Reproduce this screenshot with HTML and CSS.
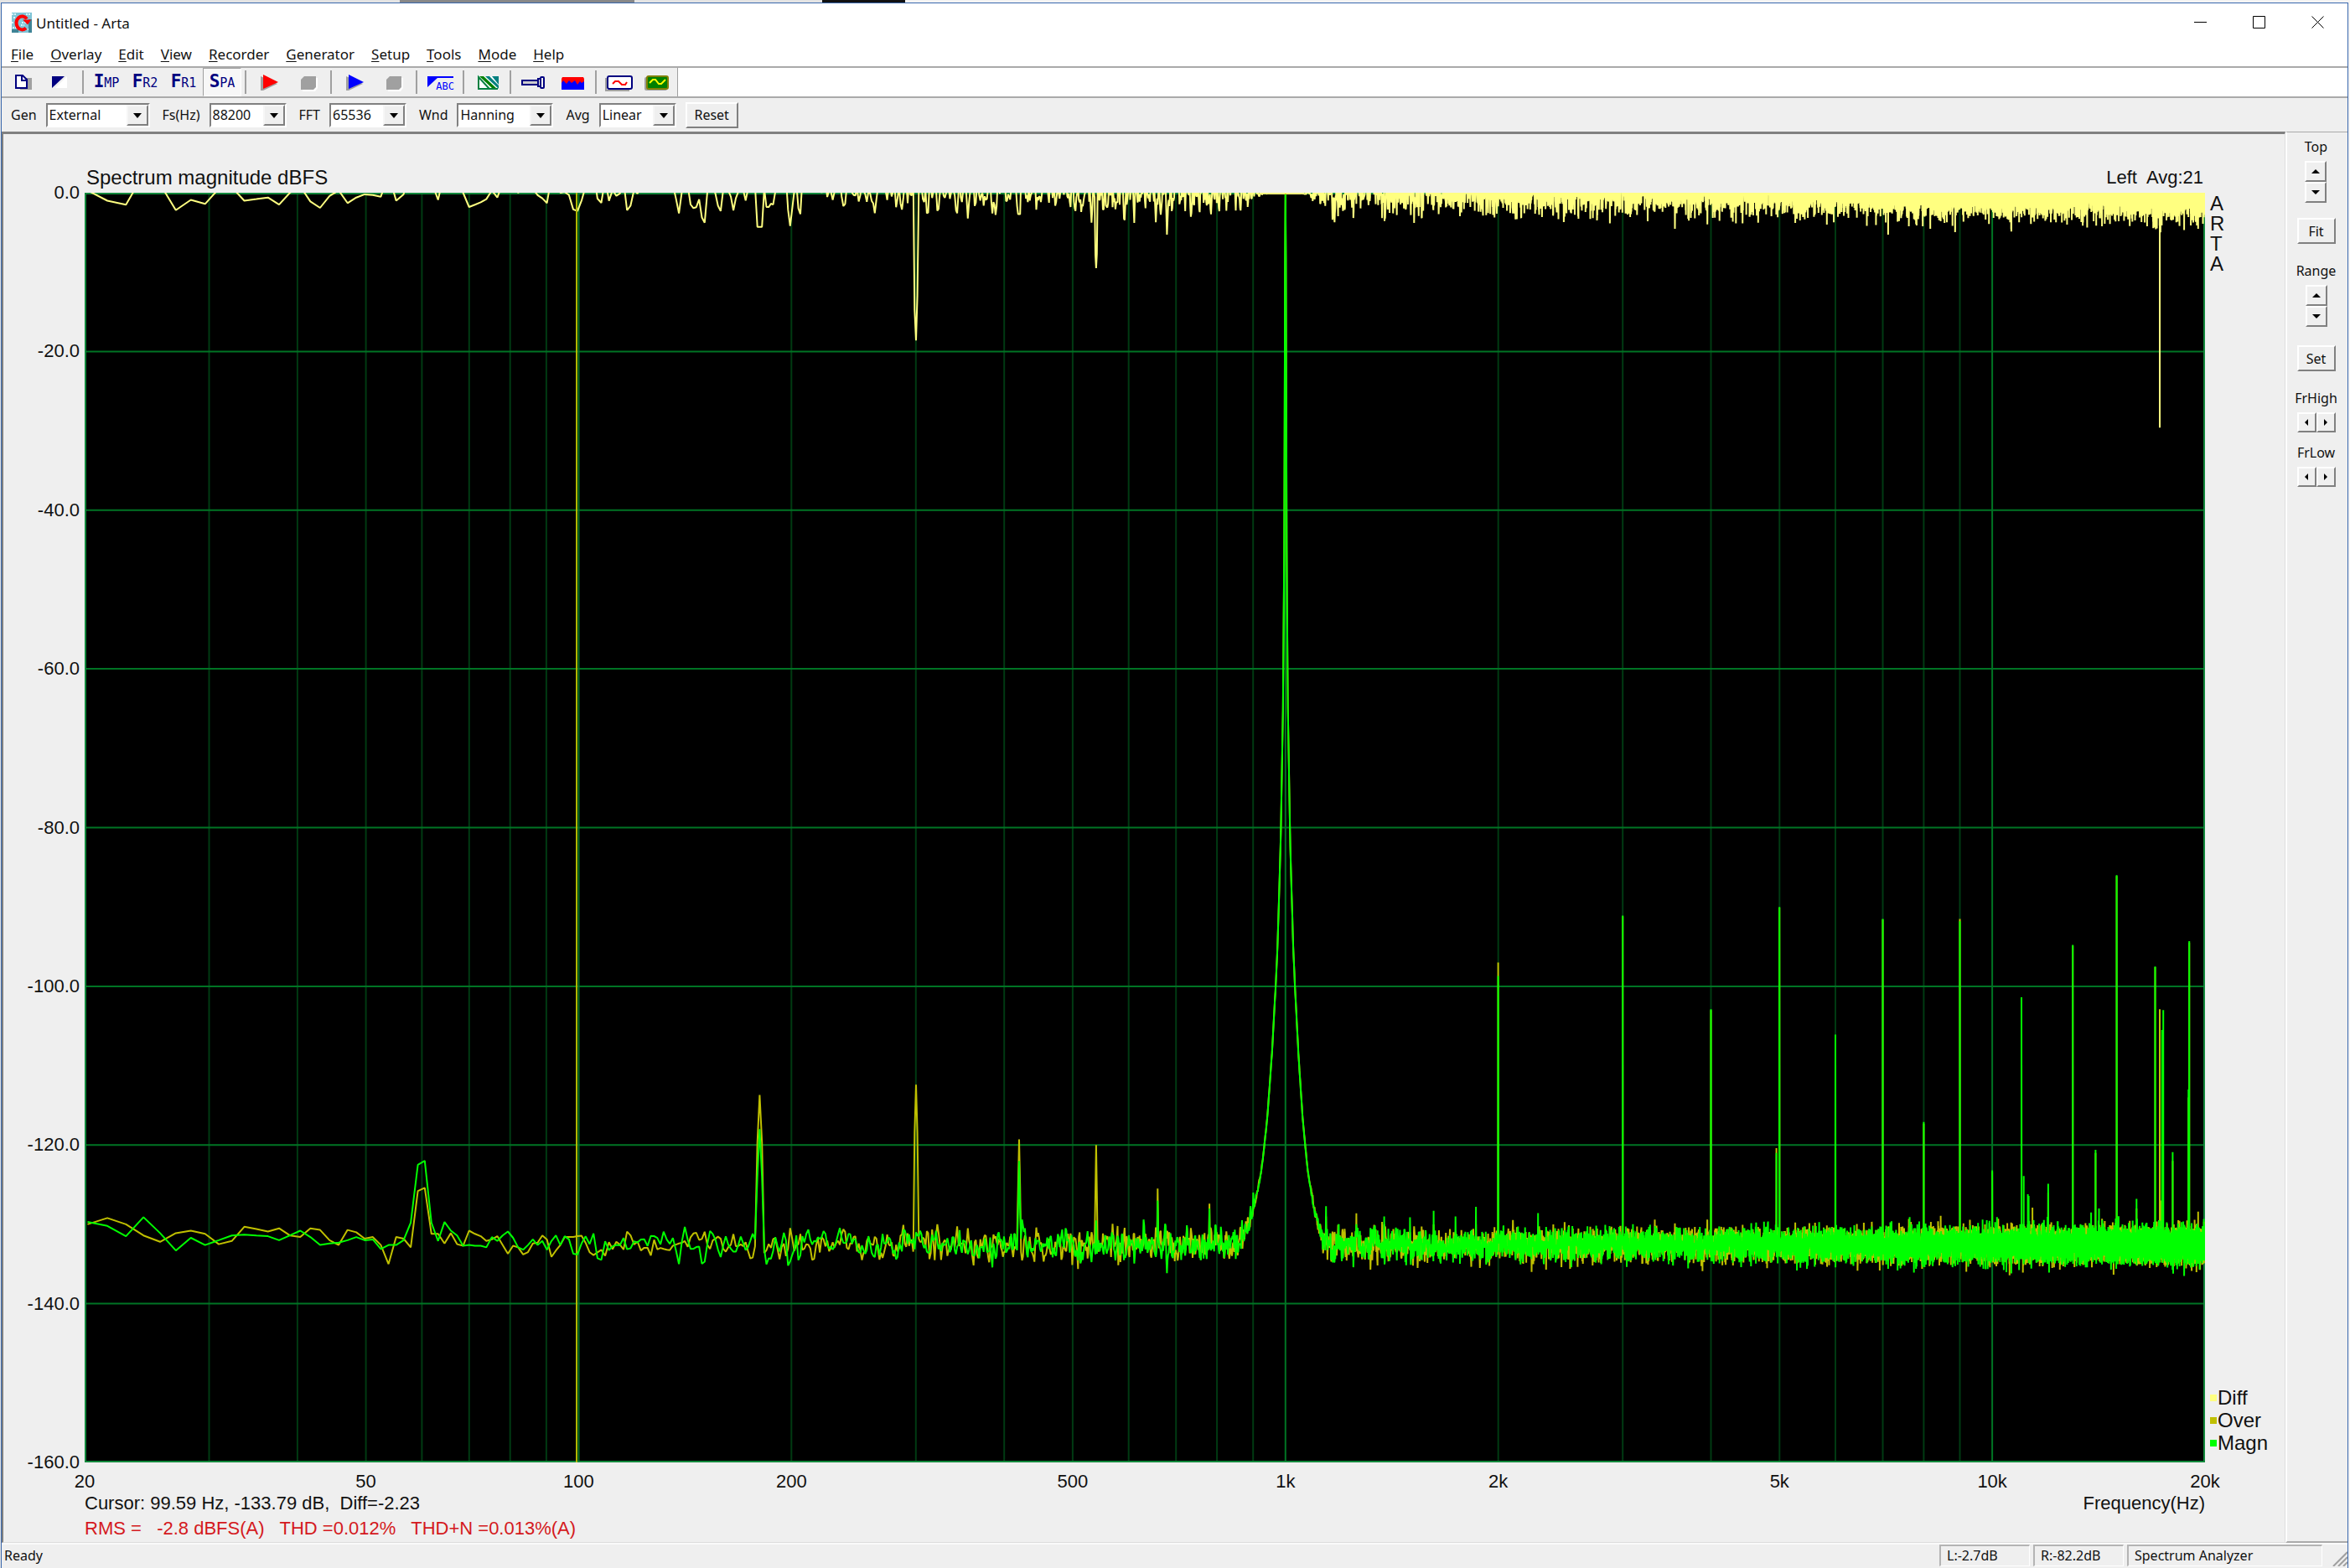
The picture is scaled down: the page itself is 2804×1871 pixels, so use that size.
FILE: index.html
```html
<!DOCTYPE html>
<html lang="en">
<head>
    <meta charset="UTF-8">
    <meta name="viewport" content="width=device-width, initial-scale=1.0">
    <title>Untitled - Arta</title>
    <link rel="stylesheet" href="styles.css">
</head>
<body>
    <div class="window">
        <header class="titlebar">
            <svg class="app-icon" width="24" height="24" viewBox="0 0 24 24" aria-hidden="true">
                <rect width="24" height="24" fill="#7fc4d6"/>
                <path d="M0 2h6M2 6h3M0 12h3M1 18h4M17 2h6M19 20h4M12 12h6M11 15h4" stroke="#d4f2f8" stroke-width="2" stroke-dasharray="2 1"/>
                <path d="M20 8h4v16h-4zM0 20h8v4H0z" fill="#3f8496"/>
                <path d="M17 18.500a7 8 0 1 1 1-11" fill="none" stroke="#f00" stroke-width="4"/>
                <path d="M13 8.500h10l-4 6z" fill="#f00"/>
            </svg>
            <h1 class="title">Untitled - Arta</h1>
            <div class="window-buttons">
                <button type="button" aria-label="Minimize"><svg width="16" height="16" viewBox="0 0 16 16"><path d="M0 7.500h15"/></svg></button>
                <button type="button" aria-label="Maximize"><svg width="16" height="16" viewBox="0 0 16 16"><path d="M.5.500h14v14H.5z"/></svg></button>
                <button type="button" aria-label="Close"><svg width="16" height="16" viewBox="0 0 16 16"><path d="M.5.500l14 14M14.500.500l-14 14"/></svg></button>
            </div>
        </header>

        <nav class="menu">
            <a href="#"><u>F</u>ile</a>
            <a href="#"><u>O</u>verlay</a>
            <a href="#"><u>E</u>dit</a>
            <a href="#"><u>V</u>iew</a>
            <a href="#"><u>R</u>ecorder</a>
            <a href="#"><u>G</u>enerator</a>
            <a href="#"><u>S</u>etup</a>
            <a href="#"><u>T</u>ools</a>
            <a href="#"><u>M</u>ode</a>
            <a href="#"><u>H</u>elp</a>
        </nav>

        <div class="toolbar-row">
            <div class="toolbar">
                <button type="button" aria-label="Copy">
                    <svg width="46" height="34" viewBox="0 0 46 34">
                        <path d="M24 12h12v14H22z" fill="#a0a0a0"/>
                        <path d="M17 9h8l5 5v10H17z" fill="#fff" stroke="#000080" stroke-width="2"/>
                        <path d="M24 9v6h6" fill="none" stroke="#000080" stroke-width="2"/>
                    </svg>
                </button>
                <button type="button" aria-label="Black and white background">
                    <svg width="46" height="34" viewBox="0 0 46 34">
                        <path d="M32 10v14H18z" fill="#fff"/>
                        <path d="M14 10h15L14 24z" fill="#000080"/>
                    </svg>
                </button>
                <span class="sep"></span>
                <button type="button" class="mode"><b>I</b>MP</button>
                <button type="button" class="mode"><b>F</b>R2</button>
                <button type="button" class="mode"><b>F</b>R1</button>
                <button type="button" class="mode pressed"><b>S</b>PA</button>
                <span class="sep"></span>
                <button type="button" aria-label="Record">
                    <svg width="46" height="34" viewBox="0 0 46 34">
                        <path d="M13 10v17h3l17-8z" fill="#a0a0a0"/>
                        <path d="M16 8v17l18-8z" fill="#f00"/>
                    </svg>
                </button>
                <button type="button" aria-label="Stop recording">
                    <svg width="46" height="34" viewBox="0 0 46 34">
                        <path d="M20 12h15v12l-3 4H17z" fill="#fff"/>
                        <path d="M19 10h14v13l-3 3H15V14z" fill="#a0a0a0"/>
                    </svg>
                </button>
                <span class="sep"></span>
                <button type="button" aria-label="Start generator">
                    <svg width="46" height="34" viewBox="0 0 46 34">
                        <path d="M13 10v17h3l17-8z" fill="#a0a0a0"/>
                        <path d="M16 8v17l18-8z" fill="#00f"/>
                    </svg>
                </button>
                <button type="button" aria-label="Stop generator">
                    <svg width="46" height="34" viewBox="0 0 46 34">
                        <path d="M20 12h15v12l-3 4H17z" fill="#fff"/>
                        <path d="M19 10h14v13l-3 3H15V14z" fill="#a0a0a0"/>
                    </svg>
                </button>
                <span class="sep"></span>
                <button type="button" class="weighting">
                    <svg width="46" height="34" viewBox="0 0 46 34" aria-hidden="true">
                        <path d="M8 10h31v2H20L8 23z" fill="#00f"/>
                    </svg>
                    <span>ABC</span>
                </button>
                <span class="sep"></span>
                <button type="button" aria-label="Overlay">
                    <svg width="46" height="34" viewBox="0 0 46 34">
                        <rect x="12" y="10" width="25" height="16" fill="#fff"/>
                        <path d="M29 10h8v10z" fill="#008080"/>
                        <path d="M14 10h5l16 15h-5z" fill="#008000"/>
                        <path d="M21 10h5l11 11v4z" fill="#008080"/>
                        <path d="M13 11v14h13zM13 25h23" fill="none" stroke="#008040" stroke-width="2"/>
                    </svg>
                </button>
                <span class="sep"></span>
                <button type="button" aria-label="Calibrate">
                    <svg width="46" height="34" viewBox="0 0 46 34">
                        <path d="M9 15h19v5H9z" fill="#ccc" stroke="#000080" stroke-width="2"/>
                        <rect x="28" y="13" width="4" height="9" fill="#efefef" stroke="#000080" stroke-width="2"/>
                        <rect x="31" y="11" width="4" height="13" rx="1" fill="#efefef" stroke="#000080" stroke-width="2"/>
                    </svg>
                </button>
                <button type="button" aria-label="Spectrum scaling">
                    <svg width="46" height="34" viewBox="0 0 46 34">
                        <path d="M11 11h25l1 2v13H10V13z" fill="#f00"/>
                        <path d="M10 18l2-3 4 4 3-4 3 3 4-3 3 5 3-4 2 2 3-2v10H10z" fill="#00f"/>
                    </svg>
                </button>
                <span class="sep"></span>
                <button type="button" aria-label="Audio device setup">
                    <svg width="46" height="34" viewBox="0 0 46 34">
                        <path d="M7 12v15h28" fill="none" stroke="#a0a0a0" stroke-width="2"/>
                        <rect x="9" y="10" width="29" height="15" rx="2" fill="#fff" stroke="#000080" stroke-width="2"/>
                        <path d="M15 19l3-3h4l4 4h4l2-3" fill="none" stroke="#f00" stroke-width="2"/>
                    </svg>
                </button>
                <button type="button" aria-label="Measurement setup">
                    <svg width="46" height="34" viewBox="0 0 46 34">
                        <rect x="7" y="11" width="27" height="16" rx="2" fill="#a0a0a0"/>
                        <rect x="10" y="10" width="25" height="15" rx="2" fill="#008000" stroke="#808000" stroke-width="2"/>
                        <path d="M13 18l4-4h3l4 5h3l5-5" fill="none" stroke="#ff0" stroke-width="2"/>
                    </svg>
                </button>
            </div>
        </div>

        <div class="settings">
            <label for="gen">Gen</label>
            <span class="combo combo-gen"><select id="gen"><option>External</option></select><i></i></span>
            <label for="fs">Fs(Hz)</label>
            <span class="combo combo-num"><select id="fs"><option>88200</option></select><i></i></span>
            <label for="fft">FFT</label>
            <span class="combo combo-num"><select id="fft"><option>65536</option></select><i></i></span>
            <label for="wnd">Wnd</label>
            <span class="combo combo-wnd"><select id="wnd"><option>Hanning</option></select><i></i></span>
            <label for="avg">Avg</label>
            <span class="combo combo-num"><select id="avg"><option>Linear</option></select><i></i></span>
            <button type="button" class="push reset">Reset</button>
        </div>

        <main class="workspace">
            <section class="chart">
                <div class="chart-head">
                    <h2>Spectrum magnitude dBFS</h2>
                    <span class="channel">Left&nbsp; Avg:21</span>
                </div>
                <div class="y-axis">
                    <span>0.0</span>
                    <span>-20.0</span>
                    <span>-40.0</span>
                    <span>-60.0</span>
                    <span>-80.0</span>
                    <span>-100.0</span>
                    <span>-120.0</span>
                    <span>-140.0</span>
                    <span>-160.0</span>
                </div>
                <svg id="plot" class="plot" viewBox="0 0 2530 1515" preserveAspectRatio="none" role="img" aria-label="Spectrum magnitude">
                    <path id="grid-minor" class="grid-minor"/>
                    <path id="grid-major" class="grid-major"/>
                    <path class="frame" d="M0 0H2530V1515H0z"/>
                    <path id="trace-diff" class="trace diff"/>
                    <path id="cursor" class="cursor"/>
                    <path id="trace-over" class="trace over"/>
                    <path id="trace-magn" class="trace magn"/>
                </svg>
                <div class="chart-side">
                    <div class="brand"><span>A</span><span>R</span><span>T</span><span>A</span></div>
                    <ul class="legend">
                        <li class="diff">Diff</li>
                        <li class="over">Over</li>
                        <li class="magn">Magn</li>
                    </ul>
                </div>
                <div class="chart-foot">
                    <div id="x-axis" class="x-axis"></div>
                    <div class="readout">
                        <span>Cursor: 99.59 Hz, -133.79 dB,&nbsp; Diff=-2.23</span>
                        <span>Frequency(Hz)</span>
                    </div>
                    <p class="rms">RMS =&nbsp;&nbsp; -2.8 dBFS(A)&nbsp;&nbsp; THD =0.012%&nbsp;&nbsp; THD+N =0.013%(A)</p>
                </div>
            </section>

            <aside class="sidebar">
                <div class="group">
                    <span>Top</span>
                    <div class="spin vertical">
                        <button type="button" class="push up" aria-label="Top up"></button>
                        <button type="button" class="push down" aria-label="Top down"></button>
                    </div>
                </div>
                <button type="button" class="push wide">Fit</button>
                <div class="group">
                    <span>Range</span>
                    <div class="spin vertical">
                        <button type="button" class="push up" aria-label="Range up"></button>
                        <button type="button" class="push down" aria-label="Range down"></button>
                    </div>
                </div>
                <button type="button" class="push wide">Set</button>
                <div class="group">
                    <span>FrHigh</span>
                    <div class="spin">
                        <button type="button" class="push left" aria-label="FrHigh down"></button>
                        <button type="button" class="push right" aria-label="FrHigh up"></button>
                    </div>
                </div>
                <div class="group">
                    <span>FrLow</span>
                    <div class="spin">
                        <button type="button" class="push left" aria-label="FrLow down"></button>
                        <button type="button" class="push right" aria-label="FrLow up"></button>
                    </div>
                </div>
            </aside>
        </main>

        <footer class="status">
            <span class="ready">Ready</span>
            <span class="pane">L:-2.7dB</span>
            <span class="pane">R:-82.2dB</span>
            <span class="pane mode-pane">Spectrum Analyzer</span>
            <svg class="grip" width="18" height="18" viewBox="0 0 18 18" aria-hidden="true"><path d="M1 18L18 1M7 18L18 7M13 18l5-5"/></svg>
        </footer>
    </div>

    <script src="spectrum.js"></script>
</body>
</html>
```

FILE: styles.css
```css
* {
    box-sizing: border-box;
}
body {
    margin: 0;
    height: 100vh;
    padding: 3px 2px 0 1px;
    display: flex;
    background: linear-gradient(90deg, #e4e4e4 0 17%, #888 17% 27%, #e4e4e4 27% 35%, #111 35% 38.5%, #f4f4f4 38.5%);
    font-family: "Noto Sans", "Open Sans", sans-serif;
    font-size: 16px;
    color: #111;
    overflow: hidden;
}
button, select {
    font: inherit;
    color: inherit;
}
h1, h2, p, ul {
    margin: 0;
    padding: 0;
    font-weight: normal;
}
.window {
    flex: 1;
    min-width: 0;
    display: flex;
    flex-direction: column;
    border: 1px solid #3a68ad;
    border-bottom: none;
    background: #efefef;
}

/* title bar and menu */
.titlebar {
    display: flex;
    align-items: center;
    height: 46px;
    padding-left: 12px;
    background: #fff;
}
.title {
    flex: 1;
    margin-left: 5px;
    font-size: 17px;
}
.window-buttons {
    display: flex;
}
.window-buttons button {
    width: 70px;
    height: 44px;
    padding: 0;
    border: none;
    background: none;
}
.window-buttons svg {
    display: block;
    margin: auto;
    fill: none;
    stroke: #000;
}
.menu {
    display: flex;
    align-items: center;
    gap: 20px;
    height: 31px;
    padding-left: 11px;
    background: #fff;
    border-bottom: 2px solid #aaa;
    font-size: 17px;
}
.menu a {
    color: inherit;
    text-decoration: none;
}
.menu u {
    text-underline-offset: 2px;
}

/* toolbar */
.toolbar-row {
    height: 36px;
    background: #fff;
    border-bottom: 2px solid #aaa;
}
.toolbar {
    display: inline-flex;
    height: 34px;
    background: #efefef;
    border-right: 1px solid #a0a0a0;
}
.toolbar button {
    width: 46px;
    height: 34px;
    padding: 0;
    border: none;
    background: none;
}
.toolbar svg {
    display: block;
}
.sep {
    width: 10px;
    padding: 3px 0;
}
.sep::before {
    content: "";
    display: block;
    width: 2px;
    height: 28px;
    margin: 0 auto;
    background: #a0a0a0;
}
.toolbar .mode {
    font-family: "DejaVu Sans Mono", monospace;
    font-size: 15px;
    line-height: 30px;
    color: #000080;
}
.mode b {
    font-size: 21px;
}
.toolbar .pressed {
    border: 1px solid #fff;
    border-top-color: #a0a0a0;
    border-left-color: #a0a0a0;
    background: #f7f7f7;
}
.toolbar .weighting {
    position: relative;
}
.weighting span {
    position: absolute;
    right: 6px;
    bottom: 5px;
    font-family: "DejaVu Sans Mono", monospace;
    font-size: 12px;
    line-height: 14px;
    color: #00f;
}

/* settings row */
.settings {
    display: flex;
    align-items: center;
    height: 40px;
    padding-left: 11px;
}
.combo {
    position: relative;
    height: 29px;
    margin: 0 15px 0 11px;
    border: 2px solid #808080;
    border-right-color: #fff;
    border-bottom-color: #fff;
    background: #fff;
}
.combo-gen {
    width: 124px;
}
.combo-num {
    width: 92px;
}
.combo-wnd {
    width: 115px;
}
.combo select {
    display: block;
    width: 100%;
    height: 25px;
    padding: 0 2px;
    border: none;
    appearance: none;
    background: #fff;
}
.combo i {
    position: absolute;
    top: 0;
    right: 0;
    width: 26px;
    height: 25px;
    border: 2px solid #808080;
    border-top-color: #f6f6f6;
    border-left-color: #f6f6f6;
    background: #efefef;
    pointer-events: none;
}
.combo i::before {
    content: "";
    position: absolute;
    left: 6px;
    top: 8px;
    border: 5px solid transparent;
    border-top: 6px solid #000;
    border-bottom: none;
}
.push {
    padding: 0;
    border: 2px solid #808080;
    border-top-color: #fff;
    border-left-color: #fff;
    background: #efefef;
}
.reset {
    width: 63px;
    height: 31px;
    margin-left: -4px;
    line-height: 24px;
}

/* chart */
.workspace {
    flex: 1;
    min-height: 0;
    display: flex;
}
.chart {
    flex: 1;
    min-width: 0;
    display: grid;
    grid-template-columns: 97px 1fr 95px;
    grid-template-rows: 70px 1fr 95px;
    border: 2px solid #808080;
    border-top-width: 3px;
    border-right: 1px solid #ddd;
    border-bottom: 1px solid #ddd;
    font-family: "Liberation Sans", Arial, sans-serif;
    font-size: 22px;
    line-height: 24px;
}
.chart-head {
    grid-column: 2;
    display: flex;
    justify-content: space-between;
    align-items: flex-end;
    padding: 0 2px 6px;
}
.chart-head h2 {
    font-size: 24px;
}
.y-axis {
    grid-column: 1;
    display: flex;
    flex-direction: column;
    justify-content: space-between;
    margin: -12px 6px -12px 0;
    text-align: right;
}
.plot {
    width: 100%;
    height: 100%;
    min-height: 0;
    background: #000;
}
.plot path {
    fill: none;
    vector-effect: non-scaling-stroke;
}
.grid-minor {
    stroke: #003a12;
    stroke-width: 2px;
}
.plot .grid-major {
    stroke: #007424;
    stroke-width: 2px;
}
.frame {
    stroke: #12883c;
    stroke-width: 4px;
}
.cursor {
    stroke: #b0b800;
    stroke-width: 2px;
}
.trace {
    stroke-width: 2px;
    stroke-linejoin: bevel;
}
.trace.diff {
    stroke: #ffff80;
}
.trace.over {
    stroke: #c0c000;
}
.trace.magn {
    stroke: #00ff00;
}
.chart-side {
    display: flex;
    flex-direction: column;
    justify-content: space-between;
    padding-left: 6px;
    font-size: 24px;
}
.brand {
    display: flex;
    flex-direction: column;
    align-items: flex-start;
    padding-top: 1px;
}
.legend {
    list-style: none;
    line-height: 27px;
    padding-bottom: 10px;
}
.legend li {
    display: flex;
    align-items: center;
    gap: 1px;
}
.legend li::before {
    content: "";
    width: 8px;
    height: 8px;
}
.legend .diff::before {
    background: #ffff80;
}
.legend .over::before {
    background: #c0c000;
}
.legend .magn::before {
    background: #00ff00;
}
.chart-foot {
    grid-column: 2;
    display: flex;
    flex-direction: column;
    padding-top: 11px;
}
.x-axis {
    position: relative;
    height: 26px;
}
.x-axis span {
    position: absolute;
    transform: translateX(-50%);
}
.readout {
    display: flex;
    justify-content: space-between;
}
.rms {
    margin-top: 6px;
    color: #d41920;
}

/* right hand controls */
.sidebar {
    width: 74px;
    display: flex;
    flex-direction: column;
    align-items: center;
    padding: 5px 3px 0 0;
    border: 2px solid #fff;
    border-top: 1px solid #aaa;
    border-right: none;
    border-bottom: 2px solid #aaa;
}
.group {
    display: flex;
    flex-direction: column;
    align-items: center;
    gap: 5px;
    line-height: 24px;
}
.spin {
    display: flex;
}
.spin .push {
    width: 23px;
    height: 24px;
    display: flex;
    align-items: center;
    justify-content: center;
}
.vertical {
    flex-direction: column;
}
.vertical .push {
    width: 26px;
    height: 25px;
}
.wide {
    width: 46px;
    height: 31px;
    margin: 18px 0 20px;
    line-height: 24px;
}
.group ~ .group + .wide {
    margin-top: 22px;
}
.spin .push::before {
    content: "";
    border: 5px solid transparent;
}
.spin .up::before {
    border-bottom-color: #000;
    border-top: none;
}
.spin .down::before {
    border-top-color: #000;
    border-bottom: none;
}
.spin .left::before {
    border-width: 4px;
    border-right-color: #000;
    border-left: none;
}
.spin .right::before {
    border-width: 4px;
    border-left-color: #000;
    border-right: none;
}
.group + .group {
    margin-top: 12px;
}

/* status bar */
.status {
    display: flex;
    align-items: center;
    gap: 4px;
    height: 30px;
    padding: 0 0 2px 3px;
    border-top: 2px solid #fafafa;
}
.ready {
    flex: 1;
}
.pane {
    width: 108px;
    height: 26px;
    padding-left: 7px;
    line-height: 23px;
    border: 1px solid #fff;
    border-top: 2px solid #b4b4b4;
    border-left: 2px solid #b4b4b4;
}
.mode-pane {
    width: 233px;
}
.grip {
    align-self: flex-end;
    margin-left: 8px;
    fill: none;
    stroke: #a0a0a0;
    stroke-width: 2px;
}
```

FILE: spectrum.js
```js
const W = 2530;
const H = 1515;
const F_LOW = 20;
const F_HIGH = 20000;
const RANGE = 160;
const BIN = 88200 / 65536;
const FLOOR = -132.6;

const xOf = f => Math.log10(f / F_LOW) / Math.log10(F_HIGH / F_LOW) * W;
const yOf = db => -db / RANGE * H;

// measured levels for bins 15..74 (20 - 100 Hz)
const LOW_MAGN = [-129.7, -130.2, -131.5, -129.1, -131.1, -133.3, -131.7, -132.6, -132, -131.4,
    -131.3, -131.4, -131.5, -132, -131.4, -130.8, -131.6, -132.6, -132.4, -132.3,
    -132, -131.6, -132, -131.9, -133.1, -132.6, -132.6, -132, -129.8, -122.5,
    -122, -129.8, -132.1, -129.7, -130.8, -131.4, -132.7, -132.6, -132.7, -132.7,
    -132.9, -131.6, -132.1, -131.4, -130.9, -131.7, -132.9, -133.2, -132.6, -131.9,
    -132.6, -132.1, -133.2, -132.1, -131.4, -132.6, -131.5, -131.9, -133.7, -133.8];
const LOW_OVER = [-130, -129.2, -130, -131.4, -132.2, -131.1, -130.8, -131.2, -132.5, -132.1,
    -130.3, -130.6, -130.9, -130.5, -131.4, -131.6, -130.5, -130.7, -132, -132.6,
    -130.7, -131, -131.8, -131.6, -132.6, -135, -131.6, -131.8, -132.9, -125.8,
    -125.4, -131.2, -131.2, -132.4, -131.1, -132.5, -132.7, -130.8, -131.2, -131.5,
    -132.1, -131.9, -131.5, -132.6, -133.7, -132.7, -132.9, -133.8, -133.5, -132.4,
    -132.3, -131.4, -131.9, -134.1, -133.3, -132.6, -131.6, -131.6, -131.6, -131.5];

// [Hz, magn dB, over dB]
const PEAKS = [
    [180, -118, -113.7], [300, -131, -112.4], [420, -122, -119.3], [540, -129.5, -120],
    [660, -127, -125.5], [780, -128, -127.4], [900, -126, -128],
    [1141, -127.7, -129], [1260, -130, -128.6], [1380, -129, -130], [1500, -129.1, -131],
    [1620, -128.3, -130], [1740, -129, -131], [1860, -127.8, -130],
    [2000, -98.7, -97], [3000, -91.1, -91.2], [4000, -102.9, -103], [4950, -121, -120.4],
    [5000, -90, -90.1], [6000, -106.1, -106.3], [7000, -91.5, -91.6], [8000, -117.1, -117.3],
    [9000, -91.8, -91.5], [10000, -123.2, -123.4], [11000, -101.4, -101.5], [11080, -123.9, -130],
    [11230, -126.2, -131], [11260, -126.4, -131], [11400, -131, -127.9], [12000, -124.9, -126],
    [13000, -94.8, -94.9], [13800, -128.5, -130], [14000, -120.6, -121], [14160, -128, -130],
    [15000, -86, -86.1], [16000, -126.8, -128], [17000, -97.5, -97.6], [17258, -132.5, -102.9],
    [17300, -132, -127], [17390, -105.5, -132], [17460, -103, -132], [18000, -120.9, -122],
    [18950, -113, -114], [19000, -94.3, -94.5]
];

// skirt of the 1 kHz tone: [offset Hz, dB]
const SKIRT = [[0, 0], [1, -4], [2.7, -28], [4, -45], [8, -65], [15, -81], [20, -88],
    [26, -95.5], [32, -100.5], [43, -108.5], [58, -117], [76, -124], [95, -129], [120, -136], [160, -150]];

function makeRandom(seed) {
    return function () {
        seed = (seed * 1664525 + 1013904223) >>> 0;
        return seed / 4294967296;
    };
}

function gauss(rnd) {
    return Math.sqrt(-2 * Math.log(rnd() + 1e-9)) * Math.cos(2 * Math.PI * rnd());
}

function skirt(f) {
    const d = Math.abs(f - 1000);
    for (let i = 1; i < SKIRT.length; i++) {
        if (d <= SKIRT[i][0]) {
            const [x0, y0] = SKIRT[i - 1];
            const [x1, y1] = SKIRT[i];
            return y0 + (y1 - y0) * (d - x0) / (x1 - x0);
        }
    }
    return -200;
}

function buildTrace(low, column, seed, toneGain) {
    const rnd = makeRandom(seed);
    const last = Math.ceil(F_HIGH / BIN);
    const trace = [];
    let prev = gauss(rnd);
    for (let k = 0; k <= last; k++) {
        const next = gauss(rnd);
        const noise = FLOOR + (next + prev * 0.6) / 1.17;
        prev = next;
        trace[k] = 10 * Math.log10(10 ** (noise / 10) + 10 ** ((skirt(k * BIN) + toneGain) / 10));
    }
    for (const peak of PEAKS) {
        const k = Math.round(peak[0] / BIN);
        trace[k] = Math.max(trace[k], peak[column]);
        if (peak[0] >= 1000) continue;
        // Hann main lobe is wide enough to see only at low frequencies
        for (const n of [k - 1, k + 1]) {
            trace[n] = Math.max(trace[n], peak[column] - 6);
        }
    }
    low.forEach((db, i) => trace[15 + i] = db);
    return trace;
}

function tracePath(trace) {
    let d = '';
    for (let k = 15; k < trace.length; k++) {
        d += (d ? 'L' : 'M') + xOf(k * BIN).toFixed(1) + ' ' + yOf(trace[k]).toFixed(1);
    }
    return d;
}

function setPath(id, d) {
    document.getElementById(id).setAttribute('d', d);
}

const magn = buildTrace(LOW_MAGN, 1, 21, 0);
const over = buildTrace(LOW_OVER, 2, 4711, 0.1);
const diff = magn.map((db, k) => db - over[k]);

setPath('trace-magn', tracePath(magn));
setPath('trace-over', tracePath(over));
setPath('trace-diff', tracePath(diff));

let minor = '';
let major = '';
for (let decade = 10; decade <= 10000; decade *= 10) {
    for (let n = 1; n < 10; n++) {
        const f = decade * n;
        if (f <= F_LOW || f >= F_HIGH) continue;
        const line = 'M' + xOf(f).toFixed(1) + ' 0V' + H;
        if (n === 1) major += line;
        else minor += line;
    }
}
for (let db = -20; db > -RANGE; db -= 20) {
    major += 'M0 ' + yOf(db).toFixed(1) + 'H' + W;
}
setPath('grid-minor', minor);
setPath('grid-major', major);
setPath('cursor', 'M' + Math.floor(xOf(99.59)) + ' 0V' + H);

const axis = document.getElementById('x-axis');
for (const f of [20, 50, 100, 200, 500, 1000, 2000, 5000, 10000, 20000]) {
    const label = document.createElement('span');
    label.textContent = f >= 1000 ? f / 1000 + 'k' : f;
    label.style.left = xOf(f) / W * 100 + '%';
    axis.appendChild(label);
}
```
